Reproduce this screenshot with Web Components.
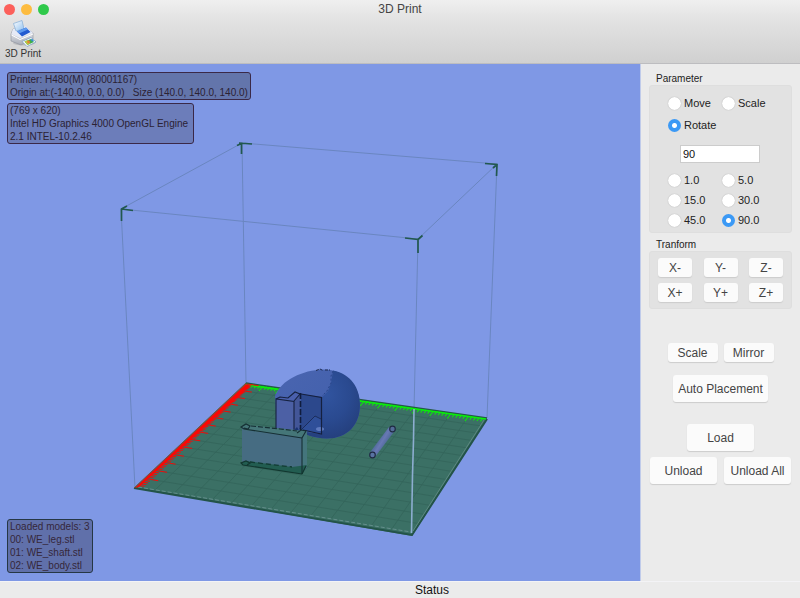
<!DOCTYPE html>
<html lang="en">
<head>
<meta charset="utf-8">
<title>3D Print</title>
<style>
html, body { margin: 0; height: 100%; }
body { font-family: "Liberation Sans", Arial, sans-serif; font-size: 12px; line-height: 16px; color: #333; background: #ebebeb; }
</style>
</head>
<body>
<app-window>
  <title-bar slot="top" heading="3D Print"><tool-button>3D Print</tool-button></title-bar>
  <print-viewport slot="view">
    <info-panel slot="top"><div>Printer: H480(M) (80001167)</div><div>Origin at:(-140.0, 0.0, 0.0)&nbsp;&nbsp; Size (140.0, 140.0, 140.0)</div></info-panel>
    <info-panel slot="top"><div>(769 x 620)</div><div>Intel HD Graphics 4000 OpenGL Engine</div><div>2.1 INTEL-10.2.46</div></info-panel>
    <info-panel slot="bottom" tone="dark"><div>Loaded models: 3</div><div>00: WE_leg.stl</div><div>01: WE_shaft.stl</div><div>02: WE_body.stl</div></info-panel>
  </print-viewport>
  <control-panel slot="side"></control-panel>
  <status-bar slot="bottom">Status</status-bar>
</app-window>

<script>
class Base extends HTMLElement {
  connectedCallback() {
    if (this.shadowRoot) return;
    this.attachShadow({ mode: "open" }).innerHTML = this.render();
  }
}

customElements.define("app-window", class extends Base {
  render() {
    return `<style>
      :host { display: flex; flex-direction: column; min-height: 100vh; }
      main { flex: 1; display: flex; min-height: 0; }
      slot[name=view]::slotted(*) { flex: 1; }
      slot[name=side]::slotted(*) { flex: none; }
    </style>
    <slot name="top"></slot><main><slot name="view"></slot><slot name="side"></slot></main><slot name="bottom"></slot>`;
  }
});

customElements.define("title-bar", class extends Base {
  render() {
    return `<style>
      :host { display: block; background: linear-gradient(#efefef, #e3e3e3 30%, #d0d0d0); border-bottom: 1px solid #bdbdc0; }
      .row { display: grid; grid-template-columns: 1fr auto 1fr; align-items: center; height: 18px; }
      .lights { display: flex; gap: 6px; padding-left: 4px; }
      i { width: 11px; height: 11px; border-radius: 50%; }
      i:nth-child(1) { background: #fc605b; } i:nth-child(2) { background: #fdbc40; } i:nth-child(3) { background: #2fc94b; }
      h1 { margin: 0; font-size: 12px; font-weight: 400; color: #444; }
      .tools { display: flex; padding: 0 5px 3px; }
    </style>
    <div class="row"><div class="lights"><i></i><i></i><i></i></div><h1>${this.getAttribute("heading")}</h1><span></span></div>
    <div class="tools"><slot></slot></div>`;
  }
});

customElements.define("tool-button", class extends Base {
  render() {
    return `<style>
      :host { display: block; }
      button { display: flex; flex-direction: column; align-items: center; padding: 0; border: 0; background: none; font: 10px/12px "Liberation Sans", Arial, sans-serif; color: #333; }
      svg { width: 30px; height: 30px; }
    </style>
    <button type="button"><svg viewBox="8 17 30 30" aria-hidden="true">
      <defs>
        <linearGradient id="b" x1="0" y1="0" x2="0" y2="1"><stop stop-color="#fafbff"/><stop offset="1" stop-color="#a7abb5"/></linearGradient>
        <linearGradient id="p" x1="0" y1="0" x2="1" y2="1"><stop stop-color="#fff"/><stop offset="1" stop-color="#8fc0ef"/></linearGradient>
      </defs>
      <ellipse cx="24" cy="42" rx="11" ry="2.500" fill="#8d8f95" opacity=".35"/>
      <path d="M11 33 L13 28 L26 26 L33 32 L33 38 L21 44 L11 40Z" fill="url(#b)" stroke="#8b909c" stroke-width=".6"/>
      <path d="M13 28 L26 25 L33 32 L20 37 L11.500 33Z" fill="#e6eaf6"/>
      <path d="M13.500 22.500 L22 19.500 L24 28 L16 30Z" fill="url(#p)" stroke="#82acd7" stroke-width=".7"/>
      <path d="M17 30.500 L26 26.500 L30.500 31 L22 35.500Z" fill="#235bd0"/>
      <path d="M17 30.500 L26 26.500 L28 28.500 L19 32.500Z" fill="#5e9bef"/>
      <path d="M11.500 34 L20 38.500 L33 33" fill="none" stroke="#fff" stroke-width="1"/>
      <path d="M22 40.500 L31 36.500 L36 41 L27 45.500Z" fill="#f8fcff" stroke="#7395bd" stroke-width=".7"/>
      <path d="M24.500 40.500 L31 38 L34 41 L27.500 44Z" fill="#42ae4a"/>
      <path d="M24.500 40.500 L28 39 L30 42.500 L27.500 44Z" fill="#b7c846"/>
      <circle cx="28.500" cy="41" r="1.400" fill="#e98132"/><path d="M30.500 38.500l2-.5 1.500 2-1.800.6Z" fill="#388bd2"/>
    </svg><span><slot></slot></span></button>`;
  }
});

customElements.define("info-panel", class extends Base {
  render() {
    return `<style>
      :host { display: block; width: max-content; box-sizing: border-box; padding: 0 2px; border: 1px solid #3a2948; border-radius: 3px;
        background: #6375ab; color: #2b2234; font-size: 10px; line-height: 13px; white-space: nowrap; }
      :host([slot=top]:nth-of-type(2)) { padding-right: 5px; background: #6c7dba; }
      :host([tone=dark]) { border-color: #263744; background: #6070aa; color: #35273a; }
    </style><slot></slot>`;
  }
});

/* Maps the unit square onto a quadrilateral with perspective. */
function projector([a, b, c, d]) {
  const sx = a[0] - b[0] + c[0] - d[0], sy = a[1] - b[1] + c[1] - d[1];
  const dx1 = b[0] - c[0], dx2 = d[0] - c[0], dy1 = b[1] - c[1], dy2 = d[1] - c[1];
  const den = dx1 * dy2 - dx2 * dy1;
  const g = (sx * dy2 - dx2 * sy) / den, h = (dx1 * sy - sx * dy1) / den;
  return (u, v) => {
    const w = g * u + h * v + 1;
    return [((b[0] - a[0] + g * b[0]) * u + (d[0] - a[0] + h * d[0]) * v + a[0]) / w,
            ((b[1] - a[1] + g * b[1]) * u + (d[1] - a[1] + h * d[1]) * v + a[1]) / w].map(n => n.toFixed(1)).join(" ");
  };
}

customElements.define("print-viewport", class extends Base {
  render() {
    const at = projector([[247, 384], [486, 419], [412, 533], [136, 487]]);
    let grid = "", red = "", green = "";
    for (let i = 1; i < 14; i++) {
      grid += `M${at(i / 14, 0)}L${at(i / 14, 1)}M${at(0, i / 14)}L${at(1, i / 14)}`;
    }
    for (let i = 0; i < 140; i += 2) {
      const long = i % 10 === 0;
      red += `M${at(0, i / 140)}L${at(long ? .05 : .025, i / 140)}`;
      green += `M${at(i / 140, 0)}L${at(i / 140, long ? .05 : .03)}`;
    }
    return `<style>
      :host { position: relative; display: flex; flex-direction: column; justify-content: space-between; box-sizing: border-box; padding: 8px 7px; background: #7f98e5; min-width: 0; }
      svg { position: absolute; inset: 0; width: 100%; height: 100%; }
      .stack { position: relative; display: flex; flex-direction: column; gap: 3px; }
    </style>
    <svg viewBox="0 64 640 517" role="img" aria-label="Build volume with three models">
      <defs>
        <linearGradient id="lit" x1="0" y1="0" x2="1" y2="1"><stop stop-color="#4a65b0"/><stop offset="1" stop-color="#3f5eab"/></linearGradient>
        <radialGradient id="dark" cx=".45" cy=".35" r=".7"><stop stop-color="#31549f"/><stop offset=".55" stop-color="#2a4a90"/><stop offset="1" stop-color="#243e7b"/></radialGradient>
        <linearGradient id="rod" gradientUnits="userSpaceOnUse" x1="378" y1="439" x2="386" y2="444"><stop stop-color="#4d6a98"/><stop offset=".5" stop-color="#6878b4"/><stop offset="1" stop-color="#506b9a"/></linearGradient>
      </defs>
      <g fill="none" stroke="#6a86c0" stroke-width="1">
        <path d="M121 209L242 143L497 164L418 239Z"/>
        <path d="M121 209L135 488M242 143L246 383M497 164L487 418M418 239L414 410"/>
      </g>
      <g fill="none" stroke="#22584f" stroke-width="1.700">
        <path d="M121.500 221V209L127 206M121.500 209L133 210.500"/>
        <path d="M241.500 154V143.500L237 145.500M239 143L252 144"/>
        <path d="M485 163.500L497 164.500L496.500 176M497 164.500L493 168"/>
        <path d="M405 238L418 239.500V253M418 239.500L422.500 235.500"/>
      </g>
      <path d="M246 383L487 418L412 536L134 488Z" fill="#3b7065"/>
      <path d="${grid}" fill="none" stroke="#34645a" stroke-width=".8"/>
      <path d="M134 488L412 535L487 419" fill="none" stroke="#235348" stroke-width="2"/>
      <path d="M138 487L411 532" fill="none" stroke="#6f9696" stroke-width=".8" stroke-dasharray="4 2"/>
      <path d="M413 531L484 420" fill="none" stroke="#668f86" stroke-width=".8"/>
      <path d="M246 383L487 418" fill="none" stroke="#245947" stroke-width="1.500"/>
      <path d="${green}" fill="none" stroke="#11e30e" stroke-width="1.100"/>
      <path d="M248 385L486 419" stroke="#08ee0a" stroke-width="1.600"/>
      <path d="${red}" fill="none" stroke="#f30b08" stroke-width="1"/>
      <path d="M246 384L135 488L139 487L250 386Z" fill="#fa0704"/>
      <path d="M246 383L134 488" fill="none" stroke="#78503f" stroke-width="1"/>
      <path d="M414 409L413.500 440L412.500 475L411.500 533" fill="none" stroke="#8dadd0" stroke-width="1.600"/>

      <path d="M275 396C281 380 303 370 323 369.500C345 369 360 386 360 405C360 425 347 439 326 438.500C312 438 303 433 299 431L277 425Z" fill="url(#lit)"/>
      <path d="M333 370.500C351 374 360 388 360 405C360 425 347 439 326 438.500C313 438 304 434 299 431L321 434L322 397L328 391L331 383Z" fill="url(#dark)"/>
      <path d="M333 371L331 376L331 383L327 391L322 396" fill="none" stroke="#2a468a" stroke-width="1" stroke-dasharray="2 2"/>
      <path d="M316 370.500L320 369L323 370.500M325 370h5" fill="none" stroke="#1d2a50" stroke-width="1" stroke-dasharray="3 1"/>
      <path d="M301 394L322 397L321 433L299 429Z" fill="#2c488c"/>
      <path d="M301 430L315 416L321 419V433Z" fill="#2f4f99"/>
      <path d="M301 430L315 416L321 419" fill="none" stroke="#1b2d5c" stroke-width="1"/>
      <ellipse cx="320" cy="429" rx="4" ry="2" fill="#5f7abf"/>
      <path d="M301 394L321.500 397.500L321.500 434L303 430" fill="none" stroke="#15203f" stroke-width="1.200"/>
      <path d="M276 399L294 401L294 431L276 428Z" fill="#4c60a5"/>
      <path d="M294 401L300 393V428L294 431Z" fill="#435698"/>
      <path d="M276 399L279 396L288 397L296 392L300 394L294 401Z" fill="#4a60ad"/>
      <path d="M276 428V399L294 401.500V430M276 399L280 397L288 398L295 392L300 394L294 401" fill="none" stroke="#162240" stroke-width="1.100"/>
      <path d="M300.500 393V430" fill="none" stroke="#101c3d" stroke-width="1.600" stroke-dasharray="6 2"/>
      <path d="M293 431L297 427L300 432Z" fill="#1a3272"/>

      <path d="M242 427L302 436L307 431V467L302 474L242 464Z" fill="#466c82"/>
      <path d="M242 427L246 425L306 431L302 437L244 430Z" fill="#457678"/>
      <path d="M302 438L307 431V466L302 473Z" fill="#44757c"/>
      <path d="M241 463L246 461L292 467L307 465L302 474L243 465Z" fill="#225d51"/>
      <path d="M302 438L244 429L241 427L246 424L250 426L248 429L244 428" fill="none" stroke="#162f34" stroke-width="1.100"/>
      <path d="M251 426L280 429L297 431" fill="none" stroke="#162f34" stroke-width="1.200" stroke-dasharray="5 2"/>
      <path d="M297 433L301 430L306 431L302 438V474" fill="none" stroke="#162f34" stroke-width="1.100"/>
      <path d="M302 474L243 465L241 463L246 461L250 463L247 465M306 466L302 474" fill="none" stroke="#12372f" stroke-width="1.200"/>
      <path d="M250 462L292 467" fill="none" stroke="#123c33" stroke-width="1.300" stroke-dasharray="5 3"/>

      <path d="M369.500 453L389 427L395 430.500L375 457Z" fill="url(#rod)"/>
      <circle cx="372.500" cy="455" r="2.800" fill="#5973a2" stroke="#202b43" stroke-width="1.200"/>
      <circle cx="392.500" cy="429" r="2.800" fill="#536c97" stroke="#202b43" stroke-width="1.200"/>
    </svg>
    <div class="stack"><slot name="top"></slot></div>
    <div class="stack"><slot name="bottom"></slot></div>`;
  }
});

customElements.define("radio-group", class extends Base {
  render() {
    const options = this.getAttribute("options").split(",");
    return `<style>
      :host { display: block; }
      div { display: grid; grid-template-columns: 54px 1fr; row-gap: var(--row-gap, 4px); }
      label { display: flex; align-items: center; gap: 3px; height: 16px; font-size: 11px; color: #222; white-space: nowrap; }
      input { appearance: none; flex: none; margin: 0; width: 13px; height: 13px; border-radius: 50%; background: #fff; box-shadow: 0 0 1px #999; }
      input:checked { background: radial-gradient(circle, #fff 2px, #3b99f5 3px); box-shadow: none; }
    </style>
    <div role="radiogroup" aria-label="${this.getAttribute("label")}">${options.map(o =>
      `<label><input type="radio" name="choice"${o === this.getAttribute("value") ? " checked" : ""}>${o}</label>`).join("")}</div>`;
  }
});

customElements.define("group-box", class extends Base {
  render() {
    return `<style>
      :host { display: block; }
      h2 { margin: 0; padding-left: 7px; font-size: 10px; line-height: 12px; font-weight: 400; color: #222; }
      section { background: #e2e2e2; border: 1px solid #dedede; border-radius: 3px; }
    </style><h2>${this.getAttribute("heading")}</h2><section><slot></slot></section>`;
  }
});

customElements.define("push-button", class extends Base {
  render() {
    return `<style>
      :host { display: block; }
      button { display: block; box-sizing: border-box; width: 100%; height: 19px; padding: 0; border: 0; border-radius: 3px; background: #fbfbfb; box-shadow: 0 1px 1px #ccc;
        font: 12px/16px "Liberation Sans", Arial, sans-serif; color: #444; white-space: nowrap; }
      :host([large]) button { height: 27px; }
      button:active { background: #ddd; }
    </style><button type="button"><slot></slot></button>`;
  }
});

customElements.define("control-panel", class extends Base {
  render() {
    return `<style>
      :host { display: block; box-sizing: border-box; width: 160px; padding: 9px 8px; border-left: 1px solid #c0cbea; background: #ebebeb; }
      .params { padding: 9px 0 4px 18px; }
      .modes { --row-gap: 6px; }
      input { display: block; box-sizing: border-box; width: 80px; height: 18px; margin: 12px 0 9px 12px; padding: 0 2px; border: 1px solid #ccc; border-radius: 0; background: #fff;
        font: 11px/14px "Liberation Sans", Arial, sans-serif; color: #111; }
      .axes { display: grid; grid-template-columns: repeat(3, 34px); justify-content: space-between; row-gap: 6px; padding: 6px 8px; }
      .second { margin-top: 6px; }
      .row { display: grid; justify-content: center; }
      .tools { grid-template-columns: 50px 50px; gap: 6px; margin-top: 34px; }
      .auto { grid-template-columns: 95px; margin-top: 13px; }
      .load { grid-template-columns: 67px; margin-top: 22px; }
      .unload { grid-template-columns: 67px 67px; gap: 7px; margin-top: 6px; }
    </style>
    <group-box heading="Parameter"><div class="params">
      <radio-group class="modes" label="Mode" options="Move,Scale,Rotate" value="Rotate"></radio-group>
      <input type="text" value="90" aria-label="Angle">
      <radio-group label="Step" options="1.0,5.0,15.0,30.0,45.0,90.0" value="90.0"></radio-group>
    </div></group-box>
    <group-box class="second" heading="Tranform"><div class="axes">
      ${["X-", "Y-", "Z-", "X+", "Y+", "Z+"].map(t => `<push-button>${t}</push-button>`).join("")}
    </div></group-box>
    <div class="row tools"><push-button>Scale</push-button><push-button>Mirror</push-button></div>
    <div class="row auto"><push-button large>Auto Placement</push-button></div>
    <div class="row load"><push-button large>Load</push-button></div>
    <div class="row unload"><push-button large>Unload</push-button><push-button large>Unload All</push-button></div>`;
  }
});

customElements.define("status-bar", class extends Base {
  render() {
    return `<style>
      :host { display: block; padding-left: 64px; border-top: 1px solid #f3f3f6; background: #ebebeb; color: #111; font-size: 12px; line-height: 16px; text-align: center; }
    </style><span role="status"><slot></slot></span>`;
  }
});
</script>
</body>
</html>
